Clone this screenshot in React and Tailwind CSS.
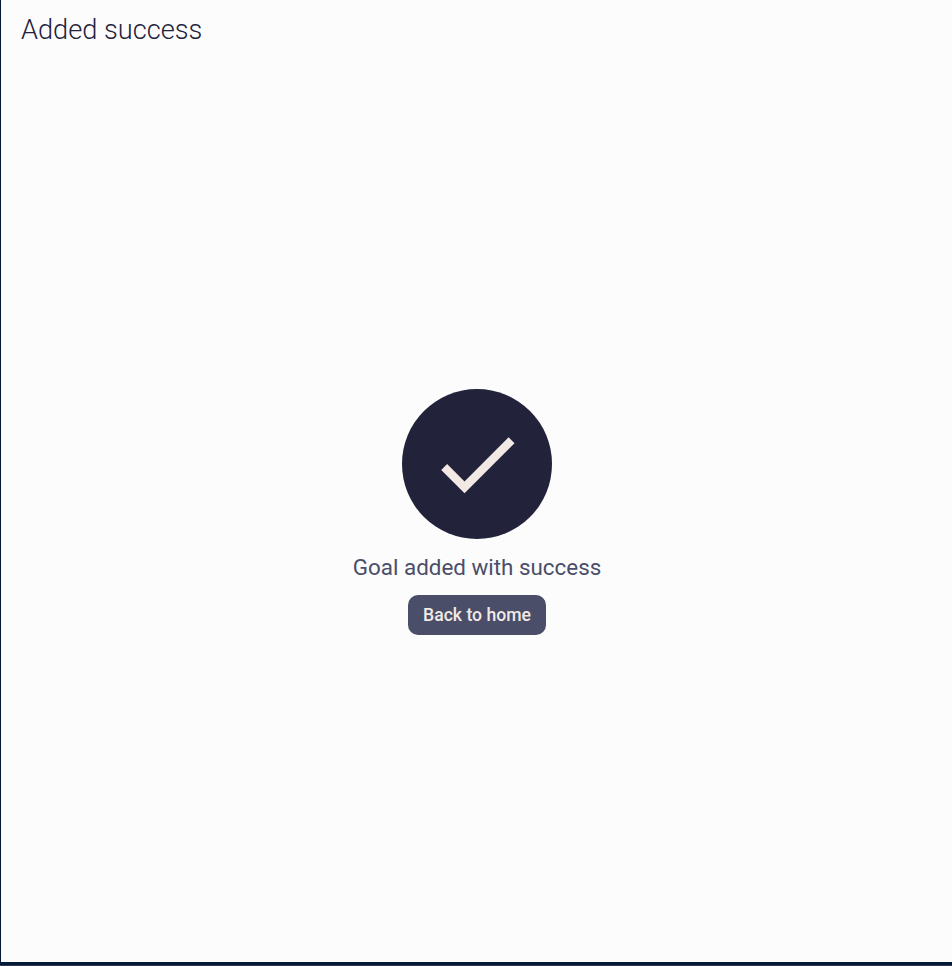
export default function App() {
  return (
    <div className="flex h-[966px] w-[952px] flex-col border-b border-[#2f3850] bg-[#fcfcfc] font-['Roboto',sans-serif]">
      <div className="flex grow flex-col border-b-3 border-l border-[#041a37]">
        <header className="flex h-[60px] shrink-0 items-center pl-5">
          <h1 className="text-[27.2px] leading-[60px] font-light text-[#22223b]">Added success</h1>
        </header>
        <main className="flex grow flex-col items-center pt-[329px]">
          <div className="flex size-[150px] shrink-0 items-center justify-center rounded-full bg-[#22223b]">
            <svg className="size-[100px]" viewBox="0 0 24 24" fill="#f2e9e4">
              <path d="M9 16.17 4.83 12l-1.42 1.41L9 19 21 7l-1.41-1.41z" />
            </svg>
          </div>
          <p className="mt-[15px] pl-px text-[22.4px] leading-[26px] text-[#4a4e69]">Goal added with success</p>
          <button className="mt-[15px] flex h-10 w-[138px] items-center justify-center rounded-[10px] bg-[#4a4e69] pl-px text-[17.6px] leading-5 font-medium text-[#f2e9e4]">
            Back to home
          </button>
        </main>
      </div>
    </div>
  );
}
